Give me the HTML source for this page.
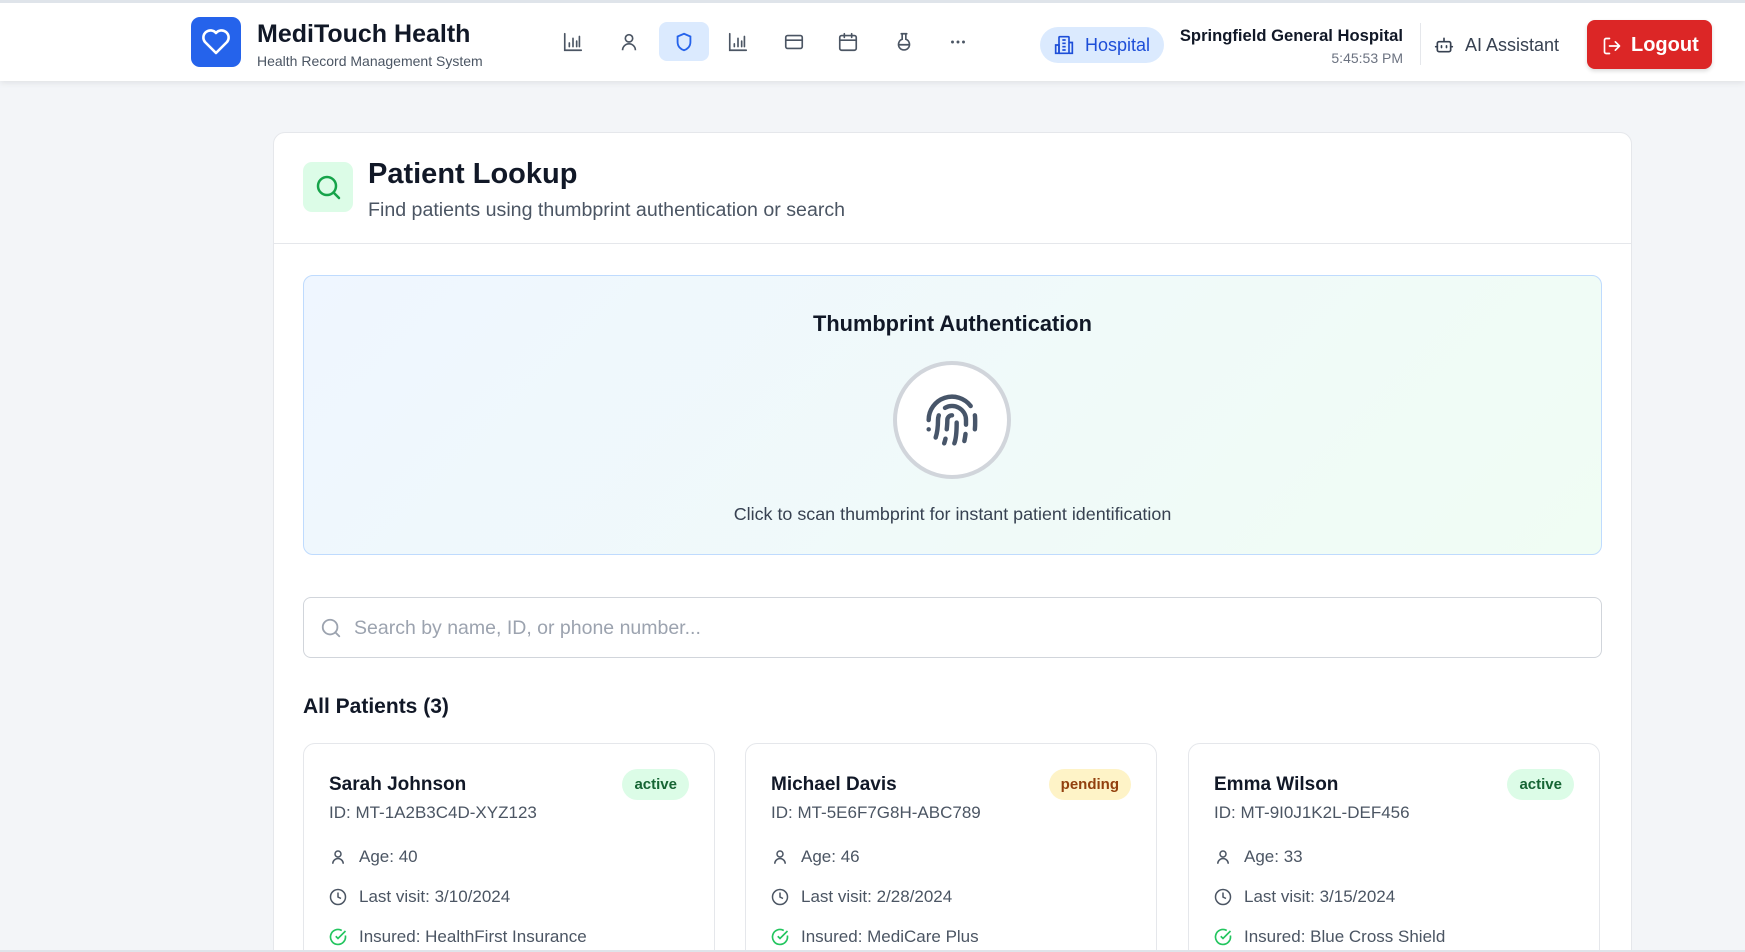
<!DOCTYPE html>
<html style="overflow:hidden;width:1745px;height:952px"><head><meta charset="utf-8"><style>
*{box-sizing:border-box;margin:0;padding:0}
body{width:1745px;height:952px;overflow:hidden;background:#f3f5f8;font-family:"Liberation Sans",sans-serif;color:#111827;position:relative}
.abs{position:absolute}
header{position:absolute;left:0;top:0;width:1745px;height:81px;background:#fff;border-top:3px solid #dfe4ea;box-shadow:0 2px 6px rgba(0,0,0,.08)}
.ic{position:absolute;width:22px;height:22px;transform:translate(-50%,-50%);top:42px}
svg{display:block}
.card{position:absolute;left:273px;top:132px;width:1359px;height:830px;background:#fff;border:1px solid #e5e7eb;border-radius:12px}
.pc{position:absolute;top:743px;width:412px;height:240px;background:#fff;border:1px solid #e5e7eb;border-radius:12px}
.pc .n{position:absolute;left:25px;top:30px;font-size:19px;font-weight:bold}
.pc .id{position:absolute;left:25px;top:59px;font-size:17px;color:#4b5563}
.pc .row{position:absolute;left:25px;font-size:17px;color:#4b5563;display:flex;align-items:center;gap:12px}
.badge{position:absolute;right:25px;top:25px;height:31px;padding:0 12px;border-radius:16px;font-size:15px;font-weight:bold;line-height:31px}
.clip{position:absolute;left:0;top:0;width:1745px;height:952px;overflow:hidden}
</style></head><body><div class="clip">
<header>
<div class="abs" style="left:191px;top:14px;width:50px;height:50px;background:#2563eb;border-radius:9px">
<svg width="50" height="50" viewBox="0 0 50 50"><path d="M25 36 L14 25 A6.5 6.5 0 0 1 25 16 A6.5 6.5 0 0 1 36 25 Z" fill="none" stroke="#fff" stroke-width="2.6" stroke-linejoin="round"/></svg></div>
<div class="abs" style="left:257px;top:17px;font-size:25px;font-weight:bold">MediTouch Health</div>
<div class="abs" style="left:257px;top:50px;font-size:14px;color:#4b5563">Health Record Management System</div>
<div class="abs" style="left:659px;top:19px;width:50px;height:39px;background:#dbeafe;border-radius:8px"></div>
<div class="ic" style="left:573px;top:39px"><svg width="22" height="22" viewBox="0 0 24 24" fill="none" stroke="#4b5563" stroke-width="1.8" stroke-linecap="round"><path d="M3 3v18h18M8 17v-4M12 17V8M16 17v-6M19 17V6"/></svg></div>
<div class="ic" style="left:629px;top:39px"><svg width="22" height="22" viewBox="0 0 24 24" fill="none" stroke="#4b5563" stroke-width="1.8"><circle cx="12" cy="8" r="4"/><path d="M5 21a7 7 0 0 1 14 0"/></svg></div>
<div class="ic" style="left:684px;top:39px"><svg width="22" height="22" viewBox="0 0 24 24" fill="none" stroke="#2563eb" stroke-width="2"><path d="M12 3l7 3v6c0 5-3.5 8-7 9-3.5-1-7-4-7-9V6z"/></svg></div>
<div class="ic" style="left:738px;top:39px"><svg width="22" height="22" viewBox="0 0 24 24" fill="none" stroke="#4b5563" stroke-width="1.8" stroke-linecap="round"><path d="M3 3v18h18M8 17v-3M12 17V8M16 17v-6M19 17V6"/></svg></div>
<div class="ic" style="left:794px;top:39px"><svg width="22" height="22" viewBox="0 0 24 24" fill="none" stroke="#4b5563" stroke-width="1.8"><rect x="3" y="5" width="18" height="14" rx="2"/><path d="M3 10h18"/></svg></div>
<div class="ic" style="left:848px;top:39px"><svg width="22" height="22" viewBox="0 0 24 24" fill="none" stroke="#4b5563" stroke-width="1.8" stroke-linecap="round"><rect x="3" y="5" width="18" height="16" rx="2"/><path d="M8 3v4M16 3v4M3 10h18"/></svg></div>
<div class="ic" style="left:904px;top:39px"><svg width="22" height="22" viewBox="0 0 24 24" fill="none" stroke="#4b5563" stroke-width="1.8" stroke-linecap="round"><path d="M9 3h6M10 3v6a6 6 0 1 0 4 0V3M7 15h10"/></svg></div>
<div class="ic" style="left:958px;top:39px"><svg width="22" height="22" viewBox="0 0 24 24" fill="#4b5563"><circle cx="6" cy="12" r="1.6"/><circle cx="12" cy="12" r="1.6"/><circle cx="18" cy="12" r="1.6"/></svg></div>
<div class="abs" style="left:1040px;top:24px;width:124px;height:36px;background:#dbeafe;border-radius:18px;color:#1d4ed8;font-size:18px;line-height:36px;padding-left:45px">Hospital</div>
<div class="abs" style="left:1054px;top:32px"><svg width="20" height="20" viewBox="0 0 24 24" fill="none" stroke="#1d4ed8" stroke-width="2"><rect x="6" y="2" width="12" height="20" rx="1"/><path d="M2 12h4v10H2zM18 9h4v13h-4M10 6h4M10 10h4M10 14h4M10 18h4"/></svg></div>
<div class="abs" style="left:1100px;width:303px;top:23px;text-align:right;font-size:16.6px;font-weight:bold;color:#111827">Springfield General Hospital</div>
<div class="abs" style="left:1200px;width:203px;top:47px;text-align:right;font-size:14px;color:#6b7280">5:45:53 PM</div>
<div class="abs" style="left:1420px;top:20px;width:1px;height:42px;background:#e5e7eb"></div>
<div class="abs" style="left:1434px;top:32px"><svg width="20" height="20" viewBox="0 0 24 24" fill="none" stroke="#374151" stroke-width="2" stroke-linecap="round"><rect x="4" y="8" width="16" height="12" rx="2"/><path d="M12 8V4M9 13v2M15 13v2M2 14h2M20 14h2"/></svg></div>
<div class="abs" style="left:1465px;top:32px;font-size:18px;color:#374151">AI Assistant</div>
<div class="abs" style="left:1587px;top:17px;width:125px;height:49px;background:#dc2626;border-radius:8px;color:#fff;font-size:20px;font-weight:bold;line-height:51px;padding-left:44px;box-shadow:0 2px 4px rgba(0,0,0,.15)">Logout</div>
<div class="abs" style="left:1602px;top:33px"><svg width="20" height="20" viewBox="0 0 24 24" fill="none" stroke="#fff" stroke-width="2" stroke-linecap="round" stroke-linejoin="round"><path d="M9 21H5a2 2 0 0 1-2-2V5a2 2 0 0 1 2-2h4M16 17l5-5-5-5M21 12H9"/></svg></div>
</header>

<div class="card">
<div class="abs" style="left:29px;top:29px;width:50px;height:50px;background:#dcfce7;border-radius:9px"><svg width="50" height="50" viewBox="0 0 50 50" fill="none" stroke="#16a34a" stroke-width="2.5" stroke-linecap="round"><circle cx="24" cy="24" r="9"/><path d="M31 31l5 5"/></svg></div>
<div class="abs" style="left:94px;top:25px;font-size:29px;font-weight:bold">Patient Lookup</div>
<div class="abs" style="left:94px;top:66px;font-size:19.6px;color:#4b5563">Find patients using thumbprint authentication or search</div>
<div class="abs" style="left:0;top:110px;width:1357px;height:1px;background:#e5e7eb"></div>
<div class="abs" style="left:29px;top:142px;width:1299px;height:280px;border:1px solid #bfdbfe;border-radius:10px;background:linear-gradient(135deg,#eff6ff,#f0fdf4)"></div>
<div class="abs" style="left:29px;width:1299px;top:178px;text-align:center;font-size:21.8px;font-weight:bold;color:#111827">Thumbprint Authentication</div>
<div class="abs" style="left:619px;top:228px;width:118px;height:118px;border-radius:50%;background:#fff;border:4px solid #d1d5db">
<svg class="abs" style="left:27px;top:27px" width="56" height="56" viewBox="0 0 24 24" fill="none" stroke="#475569" stroke-width="1.9" stroke-linecap="round"><path d="M12 10a2 2 0 0 0-2 2c0 1.02-.1 2.51-.26 4"/><path d="M14 13.12c0 2.38 0 6.38-1 8.88"/><path d="M17.29 21.02c.12-.6.43-2.3.5-3.02"/><path d="M2 12a10 10 0 0 1 18-6"/><path d="M2 16h.01"/><path d="M21.8 16c.2-2 .131-5.354 0-6"/><path d="M5 19.5C5.5 18 6 15 6 12a6 6 0 0 1 .34-2"/><path d="M8.65 22c.21-.66.45-1.32.57-2"/><path d="M9 6.8a6 6 0 0 1 9 5.2v2"/></svg></div>
<div class="abs" style="left:29px;width:1299px;top:371px;text-align:center;font-size:17.9px;color:#374151">Click to scan thumbprint for instant patient identification</div>
<div class="abs" style="left:29px;top:464px;width:1299px;height:61px;border:1px solid #d1d5db;border-radius:8px;background:#fff"></div>
<svg class="abs" style="left:46px;top:484px" width="22" height="22" viewBox="0 0 24 24" fill="none" stroke="#9ca3af" stroke-width="2" stroke-linecap="round"><circle cx="11" cy="11" r="8"/><path d="M21 21l-4.3-4.3"/></svg>
<div class="abs" style="left:80px;top:484px;font-size:19.5px;color:#9ca3af">Search by name, ID, or phone number...</div>
<div class="abs" style="left:29px;top:562px;font-size:21px;font-weight:bold;color:#111827">All Patients (3)</div>
</div>

<div class="pc" style="left:303px"><div class="n">Sarah Johnson</div><div class="badge" style="background:#dcfce7;color:#166534">active</div><div class="id">ID: MT-1A2B3C4D-XYZ123</div>
<div class="row" style="top:103px"><svg width="18" height="18" viewBox="0 0 24 24" fill="none" stroke="#4b5563" stroke-width="2"><circle cx="12" cy="8" r="4"/><path d="M5 21a7 7 0 0 1 14 0"/></svg>Age: 40</div>
<div class="row" style="top:143px"><svg width="18" height="18" viewBox="0 0 24 24" fill="none" stroke="#4b5563" stroke-width="2"><circle cx="12" cy="12" r="10"/><path d="M12 6v6l4 2"/></svg>Last visit: 3/10/2024</div>
<div class="row" style="top:183px"><svg width="18" height="18" viewBox="0 0 24 24" fill="none" stroke="#22c55e" stroke-width="2.2"><path d="M21.8 10A10 10 0 1 1 17 3.3"/><path d="M9 11l3 3L22 4"/></svg>Insured: HealthFirst Insurance</div></div>

<div class="pc" style="left:745px"><div class="n">Michael Davis</div><div class="badge" style="background:#fef3c7;color:#92400e">pending</div><div class="id">ID: MT-5E6F7G8H-ABC789</div>
<div class="row" style="top:103px"><svg width="18" height="18" viewBox="0 0 24 24" fill="none" stroke="#4b5563" stroke-width="2"><circle cx="12" cy="8" r="4"/><path d="M5 21a7 7 0 0 1 14 0"/></svg>Age: 46</div>
<div class="row" style="top:143px"><svg width="18" height="18" viewBox="0 0 24 24" fill="none" stroke="#4b5563" stroke-width="2"><circle cx="12" cy="12" r="10"/><path d="M12 6v6l4 2"/></svg>Last visit: 2/28/2024</div>
<div class="row" style="top:183px"><svg width="18" height="18" viewBox="0 0 24 24" fill="none" stroke="#22c55e" stroke-width="2.2"><path d="M21.8 10A10 10 0 1 1 17 3.3"/><path d="M9 11l3 3L22 4"/></svg>Insured: MediCare Plus</div></div>

<div class="pc" style="left:1188px"><div class="n">Emma Wilson</div><div class="badge" style="background:#dcfce7;color:#166534">active</div><div class="id">ID: MT-9I0J1K2L-DEF456</div>
<div class="row" style="top:103px"><svg width="18" height="18" viewBox="0 0 24 24" fill="none" stroke="#4b5563" stroke-width="2"><circle cx="12" cy="8" r="4"/><path d="M5 21a7 7 0 0 1 14 0"/></svg>Age: 33</div>
<div class="row" style="top:143px"><svg width="18" height="18" viewBox="0 0 24 24" fill="none" stroke="#4b5563" stroke-width="2"><circle cx="12" cy="12" r="10"/><path d="M12 6v6l4 2"/></svg>Last visit: 3/15/2024</div>
<div class="row" style="top:183px"><svg width="18" height="18" viewBox="0 0 24 24" fill="none" stroke="#22c55e" stroke-width="2.2"><path d="M21.8 10A10 10 0 1 1 17 3.3"/><path d="M9 11l3 3L22 4"/></svg>Insured: Blue Cross Shield</div></div>
<div class="abs" style="left:0;top:950px;width:1745px;height:2px;background:#dfe4ea"></div>
</div></body></html>
